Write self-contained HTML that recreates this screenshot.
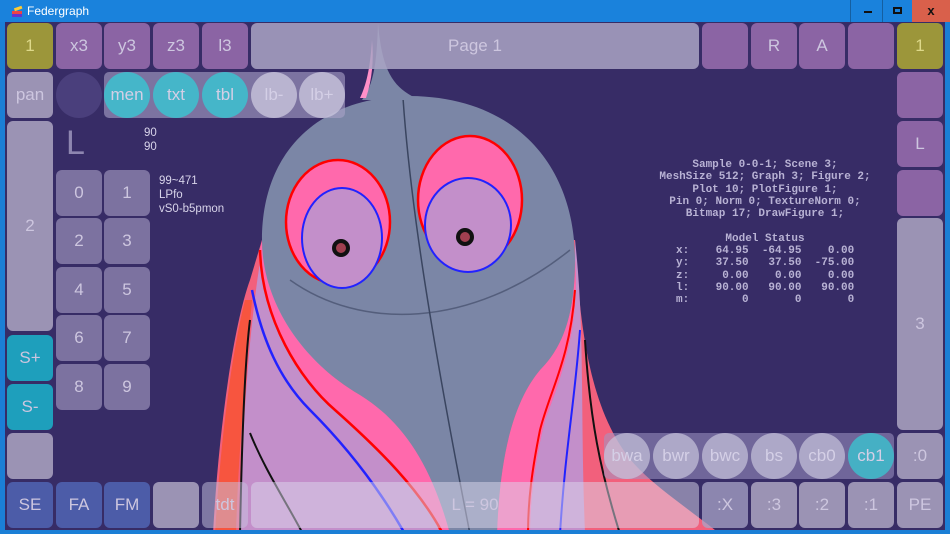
<!DOCTYPE html>
<html><head><meta charset="utf-8"><style>
*{margin:0;padding:0;box-sizing:border-box}
body{width:950px;height:534px;overflow:hidden;background:#1b7fd6;font-family:"Liberation Sans",sans-serif;position:relative}
#title{position:absolute;left:0;top:0;width:950px;height:22px;background:#1a82dc;color:#fff;font-size:12px}
#content{position:absolute;left:5px;top:22px;width:940px;height:508px;background:#372c66}
.b{position:absolute;width:46px;height:46px;border-radius:6px;color:#cdc6df;font-size:17px;display:flex;align-items:center;justify-content:center}
.p{background:#8b64a4}.g{background:#9b93b4}.k{background:#7c72a0}.y{background:#9c963a;color:#ded98a}.c{background:#1e9fbc}.bl{background:#4c5ca8}
.c2{position:absolute;width:46px;height:46px;border-radius:50%;display:flex;align-items:center;justify-content:center;font-size:17px;color:#d4cfe6}
.mono{position:absolute;font-family:"Liberation Mono",monospace;font-size:11px;color:#b8b2d4;line-height:12.3px;white-space:pre;font-weight:bold}
.sm{position:absolute;color:#d8d4ea;font-size:11.5px;line-height:14px}
</style></head><body>
<div id="title">
<svg style="position:absolute;left:10px;top:4px" width="14" height="14"><rect x="2" y="7" width="10" height="3" fill="#e44"/><rect x="2" y="10" width="10" height="3" fill="#63c"/><rect x="4" y="3" width="8" height="3" fill="#fc3" transform="rotate(-20 8 4)"/></svg>
<span style="position:absolute;left:27px;top:4px">Federgraph</span>
<div style="position:absolute;left:850px;top:0;width:1px;height:22px;background:#155fa0"></div>
<div style="position:absolute;left:882px;top:0;width:1px;height:22px;background:#155fa0"></div>
<div style="position:absolute;left:864px;top:11px;width:8px;height:2px;background:#111"></div>
<div style="position:absolute;left:893px;top:7px;width:9px;height:7px;border:2px solid #111"></div>
<div style="position:absolute;left:912px;top:0;width:38px;height:22px;background:#d9604b;color:#111;font-size:13px;font-weight:bold;text-align:center;line-height:22px">x</div>
</div>
<div id="content"></div>

<svg style="position:absolute;left:0;top:0" width="950" height="534">
<defs><clipPath id="cl"><rect x="5" y="22" width="940" height="508"/></clipPath></defs>
<g clip-path="url(#cl)">
<path d="M213,534 C218,440 232,330 250,280 L262,240 L575,240 C580,330 590,420 640,470 C660,490 690,510 720,534 Z" fill="#f2607c"/>
<path d="M215,534 C220,450 230,360 245,300 L252,300 C245,380 238,460 236,534 Z" fill="#f7553f"/>
<path d="M240,534 C242,420 250,320 262,250 L330,380 C370,420 420,470 440,534 Z" fill="#c38fca"/>
<path d="M240,534 C242,430 245,360 250,320 M250,433 C265,470 285,500 303,534" stroke="#111" stroke-width="2" fill="none"/>
<path d="M252,290 C262,340 280,380 310,410 C350,450 380,490 405,534" stroke="#22f" stroke-width="2.5" fill="none"/>
<path d="M260,250 C262,320 300,380 335,410 C380,450 420,490 443,534 L455,534 C435,460 400,420 360,395 C300,360 262,300 262,240 Z" fill="#ff69ac"/>
<path d="M260,250 C262,320 300,380 335,410 C380,450 420,490 443,534" stroke="#f00" stroke-width="2.5" fill="none"/>
<path d="M575,240 C585,330 580,400 585,534 L530,534 C530,500 535,460 545,420 C560,380 580,330 575,260 Z" fill="#c38fca"/>
<path d="M575,260 C580,330 560,380 545,420 C535,460 530,500 530,534 L497,534 C500,450 515,400 540,370 C560,350 575,320 575,260 Z" fill="#ff69ac"/>
<path d="M575,290 C570,360 550,390 540,430 C532,470 528,500 528,534" stroke="#f00" stroke-width="2" fill="none"/>
<path d="M580,330 C575,400 565,450 560,534" stroke="#22f" stroke-width="2" fill="none"/>
<path d="M585,340 C590,420 600,470 620,534" stroke="#111" stroke-width="2" fill="none"/>
<path d="M262,240 C262,150 320,97 410,96 C520,97 575,170 575,260 C575,320 560,350 540,370 C515,400 500,450 497,534 L450,534 C430,460 400,420 360,395 C300,360 262,300 262,240 Z" fill="#7b86a6"/>
<path d="M403,98 C410,200 430,330 470,534" stroke="#3a4560" stroke-width="1.5" fill="none"/>
<path d="M290,280 C360,330 470,330 570,250" stroke="#3a4560" stroke-width="1.5" fill="none" opacity=".6"/>
<path d="M378,23 C382,70 392,88 420,100 L362,100 C374,85 377,60 378,23Z" fill="#7b86a6"/>
<path d="M372,40 C370,70 366,85 360,98 L366,98 C372,80 374,60 372,40Z" fill="#ff90c8"/>
<ellipse cx="338" cy="222" rx="52" ry="62" fill="#ff69ac" stroke="#f00" stroke-width="2.5"/>
<ellipse cx="342" cy="238" rx="40" ry="50" fill="#c38fca" stroke="#22f" stroke-width="2"/>
<circle cx="341" cy="248" r="7" fill="#a04050" stroke="#111" stroke-width="4"/>
<ellipse cx="470" cy="200" rx="52" ry="64" fill="#ff69ac" stroke="#f00" stroke-width="2.5"/>
<ellipse cx="468" cy="225" rx="43" ry="47" fill="#c38fca" stroke="#22f" stroke-width="2"/>
<circle cx="465" cy="237" r="7" fill="#a04050" stroke="#111" stroke-width="4"/>
</g></svg>

<div class="b y" style="left:7px;top:23px">1</div>
<div class="b p" style="left:56px;top:23px">x3</div>
<div class="b p" style="left:104px;top:23px">y3</div>
<div class="b p" style="left:153px;top:23px">z3</div>
<div class="b p" style="left:202px;top:23px">l3</div>
<div class="b" style="left:251px;top:23px;width:448px;background:rgba(170,164,196,.85)">Page 1</div>
<div class="b p" style="left:702px;top:23px"></div>
<div class="b p" style="left:751px;top:23px">R</div>
<div class="b p" style="left:799px;top:23px">A</div>
<div class="b p" style="left:848px;top:23px"></div>
<div class="b y" style="left:897px;top:23px">1</div>

<div class="b g" style="left:7px;top:72px">pan</div>
<div class="c2" style="left:56px;top:72px;background:#4a3f7c"></div>
<div style="position:absolute;left:104px;top:72px;width:241px;height:46px;border-radius:5px;background:rgba(170,164,200,.6)"></div>
<div class="c2" style="left:104px;top:72px;background:#45b6c9">men</div>
<div class="c2" style="left:153px;top:72px;background:#45b6c9">txt</div>
<div class="c2" style="left:202px;top:72px;background:#45b6c9">tbl</div>
<div class="c2" style="left:251px;top:72px;background:rgba(200,196,220,.8)">lb-</div>
<div class="c2" style="left:299px;top:72px;background:rgba(200,196,220,.8)">lb+</div>
<div class="b p" style="left:897px;top:72px"></div>

<div class="b g" style="left:7px;top:121px;height:210px">2</div>
<div class="b c" style="left:7px;top:335px">S+</div>
<div class="b c" style="left:7px;top:384px">S-</div>
<div class="b g" style="left:7px;top:433px"></div>
<div class="b p" style="left:897px;top:121px">L</div>
<div class="b p" style="left:897px;top:170px"></div>
<div class="b g" style="left:897px;top:218px;height:212px">3</div>
<div class="b g" style="left:897px;top:433px">:0</div>

<div style="position:absolute;left:66px;top:124px;font-size:34px;color:#8e86b0">L</div>
<div class="sm" style="left:144px;top:126px">90<br>90</div>
<div class="sm" style="left:159px;top:174px">99~471<br>LPfo<br>vS0-b5pmon</div>
<div class="b k" style="left:56px;top:170px">0</div><div class="b k" style="left:104px;top:170px">1</div>
<div class="b k" style="left:56px;top:218px">2</div><div class="b k" style="left:104px;top:218px">3</div>
<div class="b k" style="left:56px;top:267px">4</div><div class="b k" style="left:104px;top:267px">5</div>
<div class="b k" style="left:56px;top:315px">6</div><div class="b k" style="left:104px;top:315px">7</div>
<div class="b k" style="left:56px;top:364px">8</div><div class="b k" style="left:104px;top:364px">9</div>

<div class="mono" style="left:650px;top:159px;width:230px;text-align:center">Sample 0-0-1; Scene 3;
MeshSize 512; Graph 3; Figure 2;
Plot 10; PlotFigure 1;
Pin 0; Norm 0; TextureNorm 0;
Bitmap 17; DrawFigure 1;

Model Status</div>
<div class="mono" style="left:676px;top:245px">x:    64.95  -64.95    0.00
y:    37.50   37.50  -75.00
z:     0.00    0.00    0.00
l:    90.00   90.00   90.00
m:        0       0       0</div>

<div style="position:absolute;left:604px;top:433px;width:290px;height:46px;border-radius:5px;background:rgba(160,152,196,.55)"></div>
<div class="c2" style="left:604px;top:433px;background:rgba(200,196,220,.7)">bwa</div>
<div class="c2" style="left:653px;top:433px;background:rgba(200,196,220,.7)">bwr</div>
<div class="c2" style="left:702px;top:433px;background:rgba(200,196,220,.7)">bwc</div>
<div class="c2" style="left:751px;top:433px;background:rgba(200,196,220,.7)">bs</div>
<div class="c2" style="left:799px;top:433px;background:rgba(200,196,220,.7)">cb0</div>
<div class="c2" style="left:848px;top:433px;background:#45b0c4">cb1</div>

<div class="b bl" style="left:7px;top:482px">SE</div>
<div class="b bl" style="left:56px;top:482px">FA</div>
<div class="b bl" style="left:104px;top:482px">FM</div>
<div class="b g" style="left:153px;top:482px"></div>
<div class="b" style="left:202px;top:482px;background:rgba(200,196,224,.5)">tdt</div>
<div class="b" style="left:251px;top:482px;width:448px;background:rgba(220,216,236,.5)">L = 90</div>
<div class="b" style="left:702px;top:482px;background:rgba(170,164,200,.75)">:X</div>
<div class="b g" style="left:751px;top:482px">:3</div>
<div class="b g" style="left:799px;top:482px">:2</div>
<div class="b g" style="left:848px;top:482px">:1</div>
<div class="b g" style="left:897px;top:482px">PE</div>
</body></html>
